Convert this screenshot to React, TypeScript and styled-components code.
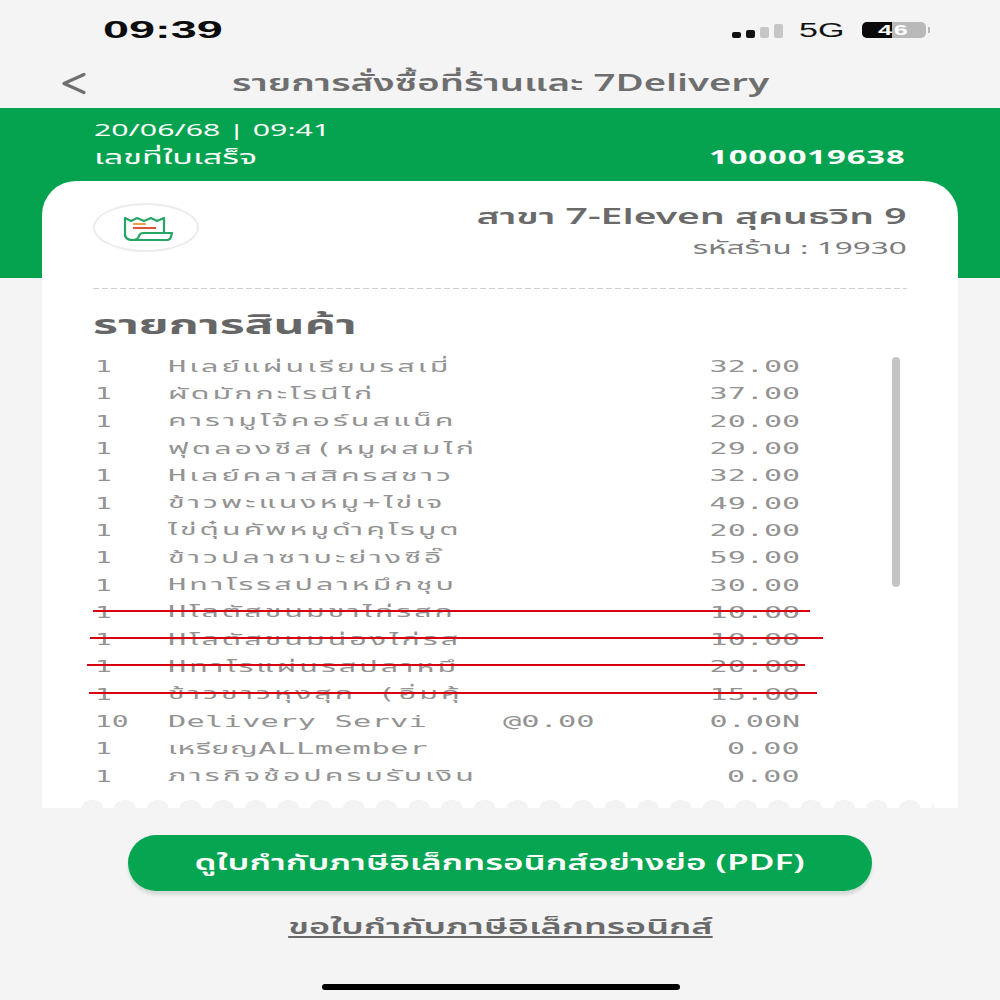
import { createGlobalStyle } from "styled-components";
import styled from "styled-components";

const GlobalStyle = createGlobalStyle`
  html, body { margin: 0; padding: 0; background: #f4f4f5; }
  * { box-sizing: border-box; }
  body { font-family: "Noto Sans", "Open Sans", "Liberation Sans", sans-serif; }
`;

const sansStack = `"Noto Sans Thai", "Noto Sans", "DejaVu Sans", sans-serif`;
const monoStack = `"DejaVu Sans Mono", "Liberation Mono", "Noto Sans Thai", monospace`;

type itemType = {
  qty: string;
  name: string;
  unit?: string;
  price: string;
  spacing?: number;
  strike?: { left: number; right: number };
};

const items: itemType[] = [
  { qty: "1", name: "Hเลย์แผ่นเรียบรสเมี่", price: "32.00" },
  { qty: "1", name: "ผัดมักกะโรนีไก่", price: "37.00" },
  { qty: "1", name: "คารามูโจ้คอร์นสแน็ค", price: "20.00" },
  { qty: "1", name: "ฟุตลองชีส(หมูผสมไก่", price: "29.00" },
  { qty: "1", name: "Hเลย์คลาสสิครสชาว", price: "32.00" },
  { qty: "1", name: "ข้าวพะแนงหมู+ไข่เจ", price: "49.00" },
  { qty: "1", name: "ไข่ตุ๋นคัพหมูดำคุโรบูต", price: "20.00" },
  { qty: "1", name: "ข้าวปลาซาบะย่างซีอิ๊", price: "59.00" },
  { qty: "1", name: "Hทาโรรสปลาหมึกชุบ", price: "30.00" },
  { qty: "1", name: "Hโลตัสขนมขาไก่รสก", price: "10.00", strike: { left: 1, right: 0 } },
  { qty: "1", name: "Hโลตัสขนมน่องไก่รส", price: "10.00", strike: { left: -2, right: -13 } },
  { qty: "1", name: "Hทาโรแผ่นรสปลาหมึ", price: "20.00", strike: { left: -5, right: 5 } },
  { qty: "1", name: "ข้าวขาวหุงสุก (อิ่มคุ้", price: "15.00", strike: { left: -3, right: -7 } },
  { qty: "10", name: "Delivery Servi", unit: "@0.00", price: "0.00N", spacing: 0.1 },
  { qty: "1", name: "เหรียญALLmember", price: "0.00", spacing: 0.3 },
  { qty: "1", name: "ภารกิจช้อปครบรับเงิน", price: "0.00" },
];

export default function App() {
  return (
    <Page>
      <GlobalStyle />
      <StatusBar>
        <Clock>09:39</Clock>
        <StatusRight>
          <SignalBars>
            <SignalBar $h={6} $on />
            <SignalBar $h={8} $on />
            <SignalBar $h={11} />
            <SignalBar $h={14} />
          </SignalBars>
          <Network>5G</Network>
          <Battery>
            <BatteryFill />
            <BatteryText>46</BatteryText>
          </Battery>
          <BatteryTip />
        </StatusRight>
      </StatusBar>

      <NavBar>
        <svg width="26" height="26" viewBox="0 0 26 26">
          <path d="M23 3.5 L3 12.5 L23 21.5" fill="none" stroke="#6f6f6f" strokeWidth="3.2" strokeLinecap="round" strokeLinejoin="round" />
        </svg>
        <NavTitle>รายการสั่งซื้อที่ร้านและ 7Delivery</NavTitle>
      </NavBar>

      <GreenBand>
        <DateText>20/06/68 | 09:41</DateText>
        <ReceiptRow>
          <ReceiptLabel>เลขที่ใบเสร็จ</ReceiptLabel>
          <ReceiptNumber>1000019638</ReceiptNumber>
        </ReceiptRow>
      </GreenBand>

      <Card>
        <StoreRow>
          <IconOval>
            <ReceiptIcon width="52" height="26" viewBox="0 0 52 26">
              <path d="M2 22 V3 L8 6 L14 3 L21 6 L28 3 L34 6 L41 3 V17" fill="none" stroke="#27a565" strokeWidth="2.2" strokeLinejoin="round" />
              <path d="M2 20 Q3 25 9 25 H44 Q48 25 49 18 H20 Q17 18 16 21 Q15 25 9 25" fill="none" stroke="#27a565" strokeWidth="2.2" strokeLinejoin="round" />
              <path d="M10 9 H23" stroke="#eda24a" strokeWidth="2" />
              <path d="M10 13 H33" stroke="#e0533d" strokeWidth="2" />
            </ReceiptIcon>
          </IconOval>
          <StoreInfo>
            <StoreName>สาขา 7-Eleven สุคนธวิท 9</StoreName>
            <StoreCode>รหัสร้าน : 19930</StoreCode>
          </StoreInfo>
        </StoreRow>
        <Divider />
        <ListTitle>รายการสินค้า</ListTitle>
        <ItemList>
          {items.map((item, i) => (
            <ItemRow key={i}>
              <Qty>{item.qty}</Qty>
              <ItemName $spacing={item.spacing ?? 1.6}>{item.name}</ItemName>
              <Unit>{item.unit}</Unit>
              <Price>{item.price}</Price>
              {item.strike && <Strike $left={item.strike.left} $right={item.strike.right} />}
            </ItemRow>
          ))}
          <ScrollThumb />
        </ItemList>
        <Scallops />
      </Card>

      <PdfButton>
        <ButtonLabel>ดูใบกำกับภาษีอิเล็กทรอนิกส์อย่างย่อ (PDF)</ButtonLabel>
      </PdfButton>
      <TaxLink>
        <TaxLinkText>ขอใบกำกับภาษีอิเล็กทรอนิกส์</TaxLinkText>
      </TaxLink>
      <HomeBar />
    </Page>
  );
}

const Page = styled.div`
  width: 1000px;
  height: 1000px;
  overflow: hidden;
  background: #f4f4f5;
  display: flex;
  flex-direction: column;
`;

const StatusBar = styled.div`
  height: 60px;
  padding: 0 70px 0 103px;
  display: flex;
  align-items: center;
  justify-content: space-between;
`;

const Clock = styled.div`
  font-family: "Liberation Sans", sans-serif;
  font-weight: 700;
  font-size: 24px;
  color: #0c0c0c;
  transform: scaleX(1.95);
  transform-origin: left center;
`;

const StatusRight = styled.div`
  display: flex;
  align-items: center;
`;

const SignalBars = styled.div`
  display: flex;
  align-items: flex-end;
  gap: 5px;
  height: 15px;
  margin-right: 16px;
`;

const SignalBar = styled.div<{ $h: number; $on?: boolean }>`
  width: 9px;
  height: ${(p) => p.$h}px;
  border-radius: 2px;
  background: ${(p) => (p.$on ? "#111" : "#c6c6c6")};
`;

const Network = styled.div`
  width: 63px;
  font-family: "Liberation Sans", sans-serif;
  font-size: 20px;
  color: #111;
  transform: scaleX(1.7);
  transform-origin: left center;
`;

const Battery = styled.div`
  position: relative;
  width: 64px;
  height: 16px;
  border-radius: 5px;
  overflow: hidden;
  background: #b9b9b9;
  display: flex;
  align-items: center;
  justify-content: center;
`;

const BatteryFill = styled.div`
  position: absolute;
  left: 0;
  top: 0;
  bottom: 0;
  width: 30px;
  background: #0a0a0a;
`;

const BatteryText = styled.span`
  position: relative;
  font-family: "Liberation Sans", sans-serif;
  font-weight: 700;
  font-size: 14px;
  letter-spacing: 1px;
  color: #fff;
  transform: scaleX(1.8);
`;

const BatteryTip = styled.div`
  width: 2px;
  height: 6px;
  margin-left: 2px;
  background: #b9b9b9;
`;

const NavBar = styled.div`
  height: 48px;
  padding-left: 61px;
  display: flex;
  align-items: center;
`;

const NavTitle = styled.div`
  margin-left: 145px;
  font-family: ${sansStack};
  font-size: 23px;
  font-weight: 600;
  color: #6e6e6e;
  white-space: nowrap;
  transform: scaleX(1.67);
  transform-origin: left center;
`;

const GreenBand = styled.div`
  height: 170px;
  flex: none;
  padding: 12px 94px 0;
  background: #05a24f;
  color: #fff;
`;

const DateText = styled.div`
  font-family: ${sansStack};
  font-size: 17px;
  line-height: 22px;
  transform: scaleX(1.78);
  transform-origin: left center;
`;

const ReceiptRow = styled.div`
  display: flex;
  justify-content: space-between;
  align-items: center;
  height: 30px;
  margin-top: 1px;
`;

const ReceiptLabel = styled.div`
  font-family: ${sansStack};
  font-size: 19px;
  transform: scaleX(1.8);
  transform-origin: left center;
`;

const ReceiptNumber = styled.div`
  font-family: ${sansStack};
  font-size: 19px;
  font-weight: 700;
  letter-spacing: 0.5px;
  transform: scaleX(1.73);
  transform-origin: right center;
`;

const Card = styled.div`
  position: relative;
  width: 916px;
  height: 627px;
  flex: none;
  margin: -97px 0 0 42px;
  padding: 22px 51px 0;
  border-radius: 34px 34px 0 0;
  background: #fff;
`;

const StoreRow = styled.div`
  display: flex;
  justify-content: space-between;
  align-items: flex-start;
  height: 85px;
`;

const IconOval = styled.div`
  width: 106px;
  height: 49px;
  border: 2px solid #ececec;
  border-radius: 50%;
  display: flex;
  align-items: center;
  justify-content: center;
`;

const ReceiptIcon = styled.svg`
  margin-left: 6px;
`;

const StoreInfo = styled.div`
  display: flex;
  flex-direction: column;
  align-items: flex-end;
`;

const StoreName = styled.div`
  font-family: ${sansStack};
  font-size: 22px;
  line-height: 30px;
  font-weight: 600;
  color: #6a6a6a;
  white-space: nowrap;
  transform: scaleX(1.78);
  transform-origin: right center;
`;

const StoreCode = styled.div`
  margin-top: 1px;
  font-family: ${sansStack};
  font-size: 17px;
  line-height: 30px;
  color: #7c7c7c;
  white-space: nowrap;
  transform: scaleX(1.85);
  transform-origin: right center;
`;

const Divider = styled.div`
  height: 1px;
  background: repeating-linear-gradient(90deg, #cfcfcf 0 6px, transparent 6px 9px);
`;

const ListTitle = styled.div`
  margin-top: 17px;
  height: 40px;
  font-family: ${sansStack};
  font-size: 26px;
  line-height: 40px;
  font-weight: 700;
  color: #666;
  transform: scaleX(1.85);
  transform-origin: left center;
`;

const ItemList = styled.div`
  position: relative;
  margin-top: 7px;
  margin-left: 2px;
`;

const ItemRow = styled.div`
  position: relative;
  height: 27.3px;
  display: grid;
  grid-template-columns: 73px 335px 150px 147px;
  align-items: center;
  font-family: ${monoStack};
  font-size: 16px;
  color: #939393;
  white-space: nowrap;
`;

const Qty = styled.span`
  transform: scaleX(1.75);
  transform-origin: left center;
`;

const ItemName = styled.span<{ $spacing: number }>`
  letter-spacing: ${(p) => p.$spacing}px;
  transform: scaleX(1.9);
  transform-origin: left center;
`;

const Unit = styled.span`
  transform: scaleX(1.9);
  transform-origin: left center;
`;

const Price = styled.span`
  justify-self: end;
  transform: scaleX(1.88);
  transform-origin: right center;
`;

const Strike = styled.div<{ $left: number; $right: number }>`
  position: absolute;
  left: ${(p) => p.$left - 3}px;
  width: ${(p) => 718 - p.$left - p.$right}px;
  top: 11px;
  height: 2px;
  background: #d8000f;
`;

const ScrollThumb = styled.div`
  position: absolute;
  left: 797px;
  top: 4px;
  width: 8px;
  height: 230px;
  border-radius: 4px;
  background: #c4c4c4;
`;

const Scallops = styled.div`
  position: absolute;
  left: 34px;
  right: 24px;
  bottom: 0;
  height: 8px;
  background: radial-gradient(ellipse 11px 8px at 50% 100%, #f3f3f3 98%, transparent 100%) 0 0 / 32.7px 8px repeat-x;
`;

const PdfButton = styled.div`
  width: 744px;
  height: 56px;
  flex: none;
  margin: 27px 0 0 128px;
  border-radius: 28px;
  background: #05a551;
  box-shadow: 0 4px 3px #d4dcd8;
  display: flex;
  align-items: center;
  justify-content: center;
`;

const ButtonLabel = styled.span`
  font-family: ${sansStack};
  font-size: 21px;
  font-weight: 600;
  color: #fff;
  white-space: nowrap;
  transform: scaleX(1.67);
`;

const TaxLink = styled.div`
  margin-top: 18px;
  height: 36px;
  display: flex;
  align-items: center;
  justify-content: center;
`;

const TaxLinkText = styled.span`
  font-family: ${sansStack};
  font-size: 21px;
  font-weight: 600;
  color: #6a6a6a;
  text-decoration: underline;
  white-space: nowrap;
  transform: scaleX(1.72);
`;

const HomeBar = styled.div`
  width: 358px;
  height: 6px;
  flex: none;
  margin: 39px 0 0 322px;
  border-radius: 3px;
  background: #000;
`;
